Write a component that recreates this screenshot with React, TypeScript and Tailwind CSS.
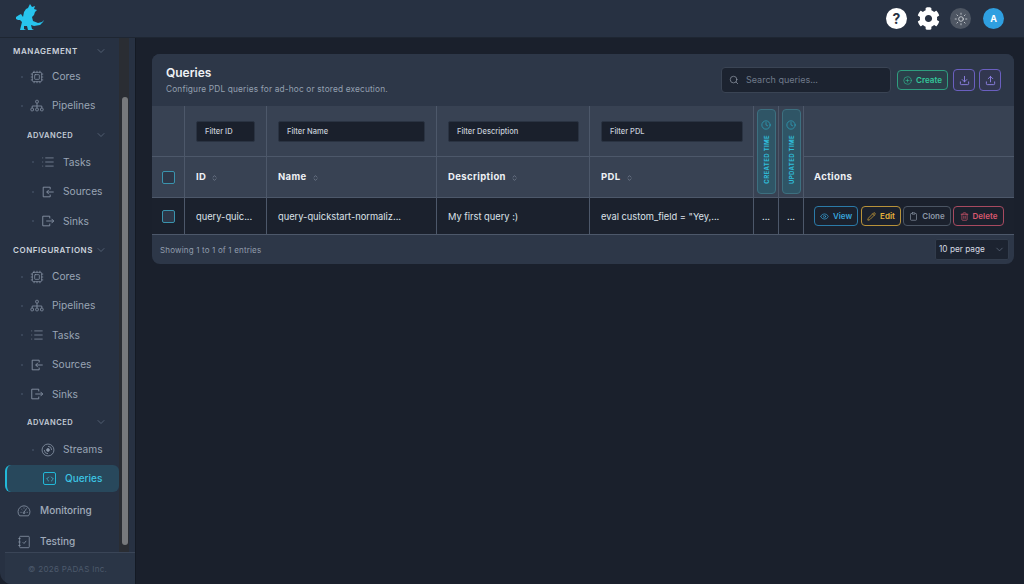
import React from 'react';
import {
  ChevronDown, ChevronsUpDown, CirclePlus, Clipboard, Clock, Code, Cpu, Download, Eye, List, Pencil,
  Search, Sun, Trash2, Upload,
} from 'lucide-react';
import { FaCog } from 'react-icons/fa';

type IconProps = { className?: string; strokeWidth?: number };
type NavItem = { label: string; icon: React.ElementType; deep?: boolean };

const PipelineIcon = ({ className }: IconProps) => (
  <svg viewBox="0 0 16 16" className={className} fill="none" stroke="currentColor" strokeWidth="0.9">
    <rect x="6.5" y="1.5" width="3" height="3" rx="0.8" />
    <path d="M8 4.5V8M2.5 10.5V8h11v2.5M8 8v2.5" />
    <rect x="1" y="10.5" width="3" height="3" rx="0.8" />
    <rect x="6.5" y="10.5" width="3" height="3" rx="0.8" />
    <rect x="12" y="10.5" width="3" height="3" rx="0.8" />
  </svg>
);

const SourceIcon = ({ className }: IconProps) => (
  <svg viewBox="0 0 16 16" className={className} fill="none" stroke="currentColor" strokeWidth="1">
    <path d="M10.5 5V2.5h-8v11h8V11M14.5 8H6.5M9 5.5 6.5 8 9 10.5" />
  </svg>
);

const SinkIcon = ({ className }: IconProps) => (
  <svg viewBox="0 0 16 16" className={className} fill="none" stroke="currentColor" strokeWidth="1">
    <path d="M10 5V2.5H2v11h8V11M6 8h8.5M12 5.5 14.5 8 12 10.5" />
  </svg>
);

const StreamIcon = ({ className }: IconProps) => (
  <svg viewBox="0 0 16 16" className={className} fill="none" stroke="currentColor" strokeWidth="0.9">
    <circle cx="8" cy="8" r="6.8" />
    <circle cx="8" cy="8" r="1.6" fill="currentColor" />
    <path d="M8 3.8A4.2 4.2 0 0 1 12.2 8M8 12.2A4.2 4.2 0 0 1 3.8 8" />
  </svg>
);

const GaugeIcon = ({ className }: IconProps) => (
  <svg viewBox="0 0 16 16" className={className} fill="none" stroke="currentColor" strokeWidth="0.9">
    <path d="M3 13.5A6.8 6.8 0 1 1 13 13.5Z" />
    <path d="M8 9.5 11 5M4 9.5h1.3M11 9.5h1.3M5.2 6 6 6.8M8 4v1.2" />
    <circle cx="8" cy="10" r="1" />
  </svg>
);

const TestIcon = ({ className }: IconProps) => (
  <svg viewBox="0 0 16 16" className={className} fill="none" stroke="currentColor" strokeWidth="0.9">
    <rect x="3" y="1.5" width="11" height="13" rx="1" />
    <path d="M1.5 4h2.5M1.5 8h2.5M1.5 12h2.5M6.5 8.2 8 9.7l2.5-3" />
  </svg>
);

const management: NavItem[] = [
  { label: 'Cores', icon: Cpu },
  { label: 'Pipelines', icon: PipelineIcon },
];
const managementAdvanced: NavItem[] = [
  { label: 'Tasks', icon: List, deep: true },
  { label: 'Sources', icon: SourceIcon, deep: true },
  { label: 'Sinks', icon: SinkIcon, deep: true },
];
const configurations: NavItem[] = [
  { label: 'Cores', icon: Cpu },
  { label: 'Pipelines', icon: PipelineIcon },
  { label: 'Tasks', icon: List },
  { label: 'Sources', icon: SourceIcon },
  { label: 'Sinks', icon: SinkIcon },
];

const Dragon = () => (
  <svg viewBox="0 0 40 32" className="w-[40px] h-[32px]" fill="#27c4ee">
    <path d="M6 15 L9 13 L11 12 L13 15 L14 10 L16 7 L18 6 L20 2 L22 5 L25 4 L24 7 L27 8 L25 10 L24 13 L22 15 L23 19 L28 21 L32 20 L34 18 L33 20 L30 23 L24 24 L21 23 L22 27 L24 28 L18 28 L17 24 L14 24 L14 27 L16 28 L10 28 L11 24 L12 20 L10 18 L8 18 L6 17 Z" />
  </svg>
);

const SectionHead = ({ label, sub }: { label: string; sub?: boolean }) => (
  <div className={`flex items-center justify-between h-[29px] pr-3 ${sub ? 'pl-[27px]' : 'pl-[13px]'}`}>
    <span className={`font-semibold tracking-[0.07em] ${sub ? 'text-[7.5px] text-[#c3cbd6]' : 'text-[8px] text-[#cbd2dc]'}`}>{label}</span>
    <ChevronDown className="w-3 h-3 text-[#5f6c80]" strokeWidth={1.5} />
  </div>
);

const NavRow = ({ label, icon: Icon, deep }: NavItem) => (
  <div className={`flex items-center h-[29.4px] ${deep ? 'pl-[32px]' : 'pl-[21px]'}`}>
    <span className="w-[2px] h-[2px] rounded-full bg-[#414d60] mr-[7px]" />
    <Icon className="w-[14px] h-[14px] text-[#8a96a8]" strokeWidth={1.25} />
    <span className="ml-[8px] text-[10.2px] text-[#9aa5b5]">{label}</span>
  </div>
);

const Sidebar = () => (
  <aside className="relative w-[136px] shrink-0 flex flex-col bg-[#273142] border-r border-[#141a24] rounded-bl-xl overflow-hidden">
    <div className="h-[514px] overflow-hidden pr-4">
      <div className="-mt-[2px]">
        <SectionHead label="MANAGEMENT" />
        <div className="-mt-[3px]">
          {management.map(i => <NavRow key={i.label} {...i} />)}
        </div>
        <SectionHead label="ADVANCED" sub />
        <div className="-mt-[2px]">
          {managementAdvanced.map(i => <NavRow key={i.label} {...i} />)}
        </div>
        <SectionHead label="CONFIGURATIONS" />
        <div className="-mt-[3px]">
          {configurations.map(i => <NavRow key={i.label} {...i} />)}
        </div>
        <div className="-mt-[1px]">
          <SectionHead label="ADVANCED" sub />
        </div>
        <div className="-mt-[2px]">
          <NavRow label="Streams" icon={StreamIcon} deep />
        </div>
        <div className="relative flex items-center h-[27px] ml-[5px] w-[114px] mt-[1px] rounded-md bg-[#28485c] border-l-2 border-[#22b8d8]">
          <span className="ml-[36px] w-[13px] h-[13px] border border-[#22b8d8] rounded-[2px] flex items-center justify-center">
            <Code className="w-[8px] h-[8px] text-[#4fd0ea]" strokeWidth={2} />
          </span>
          <span className="ml-[9px] text-[10px] font-medium text-[#3cc5e4]">Queries</span>
        </div>
        <div className="flex items-center h-[31px] pl-[17px] mt-[3px]">
          <GaugeIcon className="w-[14px] h-[14px] text-[#8a96a8]" />
          <span className="ml-[9px] text-[10px] font-medium text-[#a0abba]">Monitoring</span>
        </div>
        <div className="flex items-center h-[31px] pl-[17px]">
          <TestIcon className="w-[14px] h-[14px] text-[#8a96a8]" />
          <span className="ml-[9px] text-[10px] font-medium text-[#a0abba]">Testing</span>
        </div>
      </div>
    </div>
    {/* scrollbar */}
    <div className="absolute right-[6px] top-0 h-[514px] w-[10px] bg-[#2a2d33]">
      <div className="absolute left-[3px] top-[59px] bottom-[7px] w-[6px] rounded-full bg-[#77797c]" />
    </div>
    <div className="flex-1 ml-[5px] border-t border-[#3a4557] bg-[#2a3546] flex items-center pl-[23px]">
      <span className="text-[8px] text-[#4d5a6c] tracking-[0.04em]">© 2026 PADAS Inc.</span>
    </div>
  </aside>
);

const FilterInput = ({ text, w }: { text: string; w: string }) => (
  <div className={`h-[21px] ${w} rounded-[2px] bg-[#1a202c] border border-[#2a3342] flex items-center pl-2 pt-[1px] text-[7.5px] font-medium text-[#c8cfd9]`}>
    {text}
  </div>
);

const Th = ({ label }: { label: string }) => (
  <div className="flex items-center gap-[5px] pl-[11px] pt-[1px] border-r border-b border-[#4d586a]">
    <span className="text-[9.5px] font-bold tracking-[0.04em] text-[#eef1f5]">{label}</span>
    <ChevronsUpDown className="w-[7px] h-[8px] text-[#8a95a6]" strokeWidth={2} />
  </div>
);

const Checkbox = () => (
  <span className="w-[13px] h-[13px] rounded-[2px] border border-[#3a93ad] bg-[#2d3748]" />
);

const TimeHead = ({ label }: { label: string }) => (
  <div className="row-span-2 border-r border-b border-[#4d586a] flex justify-center pt-[3px] pb-[3px]">
    <div className="w-[19px] rounded-[4px] bg-[#2f5566] border border-[#3d7080] flex flex-col items-center pt-[10px]">
      <Clock className="w-[10px] h-[10px] text-[#2fbfdc]" strokeWidth={1.25} />
      <span className="mt-[5px] text-[6px] font-bold tracking-[0.06em] text-[#2fbfdc] [writing-mode:vertical-rl] rotate-180 whitespace-nowrap">{label}</span>
    </div>
  </div>
);

const ActionBtn = ({ label, icon: Icon, cn }: { label: string; icon: React.ElementType; cn: string }) => (
  <span className={`h-[20px] rounded-[4px] border flex items-center justify-center gap-[4px] text-[8px] font-semibold ${cn}`}>
    <Icon className="w-[9px] h-[9px]" strokeWidth={1.75} />
    {label}
  </span>
);

const td = 'flex items-center pl-[11px] pt-[2px] text-[9.3px] text-[#dde2e9] border-r border-[#4d586a] bg-[#1b212d] border-b';

export default function App() {
  return (
    <div className="w-[1024px] h-[584px] overflow-hidden flex flex-col bg-[#1a202c] font-['Inter',sans-serif]">
      <header className="h-[38px] shrink-0 bg-[#273142] flex items-center border-b border-[#1e2632]">
        <div className="ml-[10px] -mt-[2px]"><Dragon /></div>
        <div className="ml-auto flex items-center mr-[20px]">
          <span className="w-[21px] h-[21px] rounded-full bg-white flex items-center justify-center text-[14px] font-bold text-[#273142]">?</span>
          <FaCog className="ml-[10px] w-[23px] h-[23px] text-white" />
          <span className="ml-[10px] w-[21px] h-[21px] rounded-full bg-[#4e5663] flex items-center justify-center">
            <Sun className="w-[14px] h-[14px] text-[#e5e7eb]" strokeWidth={1.25} />
          </span>
          <span className="ml-[12px] w-[21px] h-[21px] rounded-full bg-[#2f9fe0] flex items-center justify-center text-[9px] font-bold text-white">A</span>
        </div>
      </header>
      <div className="flex-1 flex min-h-0">
        <Sidebar />
        <main className="flex-1 pl-4 pr-[10px] pt-4">
          <section className="rounded-lg bg-[#2d3748] overflow-hidden">
            <div className="h-[52px] flex items-center pl-[14px] pr-[13px] bg-[#2d3748]">
              <div className="-mt-[1px]">
                <h1 className="text-[12px] font-semibold text-[#eef1f5] leading-[16px]">Queries</h1>
                <p className="text-[8.3px] text-[#94a0b0] tracking-[0.02em] leading-[12px] mt-[2px]">Configure PDL queries for ad-hoc or stored execution.</p>
              </div>
              <div className="ml-auto flex items-center">
                <div className="w-[170px] h-[26px] rounded-[4px] bg-[#1c2330] border border-[#3a4454] flex items-center pl-[7px]">
                  <Search className="w-[10px] h-[10px] text-[#a0a9b6]" strokeWidth={1.5} />
                  <span className="ml-[7px] text-[9px] text-[#6f7a8a]">Search queries...</span>
                </div>
                <span className="ml-[6px] w-[51px] h-[20px] rounded-[4px] bg-[#2b3f4a] border border-[#2f9d7f] flex items-center justify-center gap-[4px] text-[8px] font-semibold text-[#34c79a]">
                  <CirclePlus className="w-[9px] h-[9px]" strokeWidth={1.5} />
                  Create
                </span>
                <span className="ml-[5px] w-[22px] h-[22px] rounded-[4px] bg-[#323750] border border-[#6a5fbf] flex items-center justify-center">
                  <Download className="w-[11px] h-[11px] text-[#8f83e8]" strokeWidth={2} />
                </span>
                <span className="ml-[4px] w-[22px] h-[22px] rounded-[4px] bg-[#323750] border border-[#6a5fbf] flex items-center justify-center">
                  <Upload className="w-[11px] h-[11px] text-[#8f83e8]" strokeWidth={2} />
                </span>
              </div>
            </div>
            <div className="grid grid-cols-[33px_82px_170px_153px_164px_25px_25px_1fr] grid-rows-[51px_41px_37px] bg-[#384253]">
              <div className="border-r border-b border-[#4d586a]" />
              <div className="border-r border-b border-[#4d586a] flex items-center pl-[11px]"><FilterInput text="Filter ID" w="w-[59px]" /></div>
              <div className="border-r border-b border-[#4d586a] flex items-center pl-[11px]"><FilterInput text="Filter Name" w="w-[147px]" /></div>
              <div className="border-r border-b border-[#4d586a] flex items-center pl-[11px]"><FilterInput text="Filter Description" w="w-[131px]" /></div>
              <div className="border-r border-b border-[#4d586a] flex items-center pl-[11px]"><FilterInput text="Filter PDL" w="w-[142px]" /></div>
              <TimeHead label="CREATED TIME" />
              <TimeHead label="UPDATED TIME" />
              <div className="border-b border-[#4d586a]" />

              <div className="border-r border-b border-[#4d586a] flex items-center justify-center"><Checkbox /></div>
              <Th label="ID" />
              <Th label="Name" />
              <Th label="Description" />
              <Th label="PDL" />
              <div className="border-b border-[#4d586a] flex items-center pl-[10px] pt-[1px] text-[9.5px] font-bold tracking-[0.04em] text-[#eef1f5]">Actions</div>

              <div className="flex items-center justify-center border-r border-b border-[#4d586a] bg-[#1b212d]"><Checkbox /></div>
              <div className={td}>query-quic...</div>
              <div className={td}>query-quickstart-normaliz...</div>
              <div className={td}>My first query :)</div>
              <div className={td}>eval custom_field = "Yey,...</div>
              <div className={`${td} justify-center !pl-0`}>...</div>
              <div className={`${td} justify-center !pl-0`}>...</div>
              <div className="bg-[#1b212d] border-b border-[#4d586a] flex items-center pl-[10px]">
                <div className="w-[44px]"><ActionBtn label="View" icon={Eye} cn="border-[#2b7aa8] text-[#38a5dc]" /></div>
                <div className="w-[40px] ml-[3px]"><ActionBtn label="Edit" icon={Pencil} cn="border-[#b8923a] text-[#e6b33c]" /></div>
                <div className="w-[48px] ml-[2px]"><ActionBtn label="Clone" icon={Clipboard} cn="border-[#4b5563] text-[#8d97a6]" /></div>
                <div className="w-[51px] ml-[2px]"><ActionBtn label="Delete" icon={Trash2} cn="border-[#a84a60] text-[#d9586f]" /></div>
              </div>
            </div>
            <div className="h-[29px] flex items-center pl-[8px] pr-[5px]">
              <span className="text-[8px] text-[#929dad] tracking-[0.02em]">Showing 1 to 1 of 1 entries</span>
              <div className="ml-auto w-[74px] h-[21px] rounded-[2px] bg-[#1c2330] border border-[#323c4c] flex items-center justify-between pl-[3px] pr-[3px] text-[8.25px] text-[#d5dae2]">
                10 per page
                <ChevronDown className="w-[11px] h-[11px] text-[#667284]" strokeWidth={1.5} />
              </div>
            </div>
          </section>
        </main>
      </div>
    </div>
  );
}
